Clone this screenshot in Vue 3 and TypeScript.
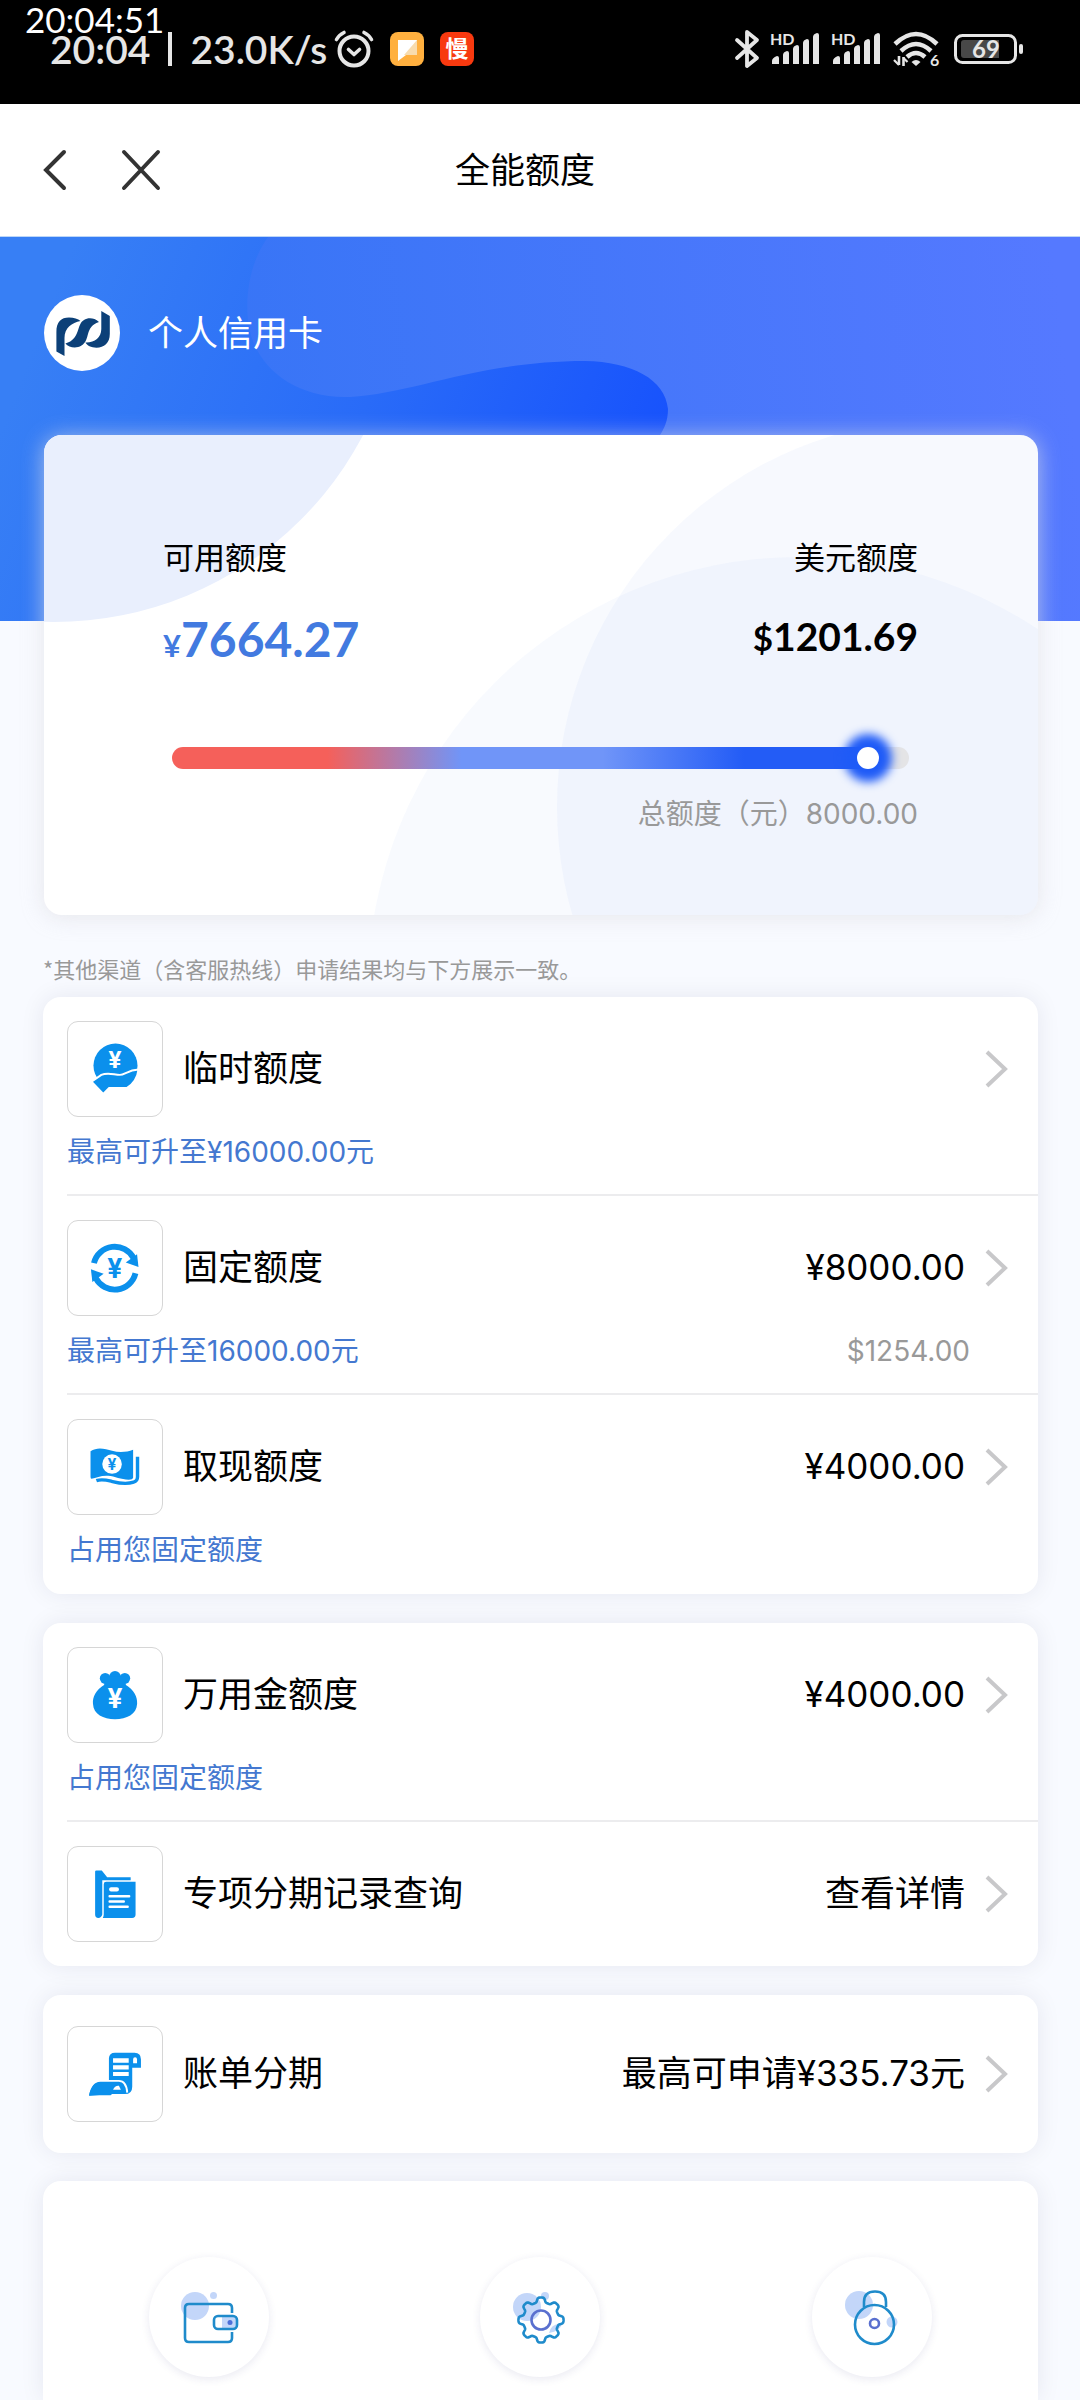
<script setup lang="ts">
import { ref } from 'vue'

interface LimitRow {
  icon: string
  title: string
  value?: string
  hint?: string
  extra?: string
}

const totalLimit = 8000
const availableLimit = ref(7664.27)
const usedPercent = (availableLimit.value / totalLimit) * 100

const groups: LimitRow[][] = [
  [
    { icon: 'hand', title: '临时额度', hint: '最高可升至¥16000.00元' },
    { icon: 'cycle', title: '固定额度', value: '¥8000.00', hint: '最高可升至16000.00元', extra: '$1254.00' },
    { icon: 'note', title: '取现额度', value: '¥4000.00', hint: '占用您固定额度' },
  ],
  [
    { icon: 'bag', title: '万用金额度', value: '¥4000.00', hint: '占用您固定额度' },
    { icon: 'folder', title: '专项分期记录查询', value: '查看详情' },
  ],
  [{ icon: 'bill', title: '账单分期', value: '最高可申请¥335.73元' }],
]

const shortcuts = [
  { icon: 'wallet', label: '钱包' },
  { icon: 'gear', label: '设置' },
  { icon: 'lock', label: '安全' },
]

// Outline of the eight-toothed gear, sampled around its centre.
const gearPath =
  Array.from({ length: 160 }, (_, i) => {
    const a = (i / 160) * Math.PI * 2
    const r = 20.2 + 2.4 * Math.tanh(2.2 * Math.cos(8 * a))
    const x = (61 + r * Math.sin(a)).toFixed(2)
    const y = (63 - r * Math.cos(a)).toFixed(2)
    return `${i ? 'L' : 'M'}${x} ${y}`
  }).join('') + 'Z'
</script>

<template>
  <div class="page">
    <header class="status">
      <span class="clock">20:04:51</span>
      <div class="status-left">
        <span>20:04</span>
        <i class="bar"></i>
        <span class="speed">23.0K/s</span>
        <svg class="alarm" viewBox="0 0 40 38" fill="none" stroke="#e6e6e6" stroke-linecap="round">
          <circle cx="20" cy="21" r="14.500" stroke-width="4" />
          <path d="M14.500 19.500l5.500 5 5.500-5" stroke-width="3.600" stroke-linejoin="round" />
          <path d="M2.500 9.500Q5 5 10 2.500M37.500 9.500Q35 5 30 2.500" stroke-width="3.600" />
        </svg>
        <svg class="app" viewBox="0 0 34 34">
          <rect width="34" height="34" rx="8" fill="#ffb03f" />
          <path d="M8 8h19v15H16l-8 6z" fill="#fff" />
          <path d="M27 8v15H14z" fill="#f8dcae" />
        </svg>
        <svg class="app" viewBox="0 0 34 34">
          <rect width="34" height="34" rx="8" fill="#f8390f" />
          <text x="17" y="25" text-anchor="middle" class="app-char">慢</text>
        </svg>
      </div>
      <div class="status-right">
        <svg class="bt" viewBox="0 0 24 38" fill="none" stroke="#e6e6e6" stroke-width="3.800" stroke-linejoin="round" stroke-linecap="round">
          <path d="M2 10l20 18-10 8V2l10 8L2 28" />
        </svg>
        <svg v-for="n in 2" :key="n" class="signal" viewBox="0 0 50 34" fill="#e6e6e6">
          <text x="0" y="13" class="hd">HD</text>
          <path d="M2 32v-3q0-3 5-5 2 0 2 2v6zM13 32V23q0-3 4-4 2 0 2 2v11zM23 32V17q0-3 4-4 2 0 2 2v17zM33 32V11q0-3 4-4 2 0 2 2v23zM43 32V5q0-3 4-4 2 0 2 2v29z" />
        </svg>
        <svg class="wifi" viewBox="0 0 46 36" fill="none" stroke="#e6e6e6" stroke-width="4.500">
          <path d="M2 13q21-20 42 0M8 20q15-14 30 0M14 26q9-8 18 0" />
          <path d="M18.500 31q4.500-4 9 0l-4.500 4z" fill="#e6e6e6" stroke="none" />
          <path d="M6 25v9M10.500 35v-9" stroke-width="2.600" />
          <path d="M1 29l5 5M10.500 27l4 4" stroke-width="2.200" />
          <text x="37" y="35" class="wifi-six">6</text>
        </svg>
        <svg class="battery" viewBox="0 0 69 30">
          <rect x="1.500" y="1.500" width="60" height="27" rx="7" fill="none" stroke="#e6e6e6" stroke-width="3" />
          <path d="M7 9q0-3 3-3h35v18H10q-3 0-3-3z" fill="#484848" />
          <rect x="65" y="10" width="4" height="10" rx="2" fill="#e6e6e6" />
          <text x="32" y="24" text-anchor="middle" class="percent">69</text>
        </svg>
      </div>
    </header>

    <nav class="nav">
      <div class="nav-buttons">
        <button type="button" aria-label="返回">
          <svg class="back" viewBox="0 0 24 42"><path d="M21 3L3 21l18 18" /></svg>
        </button>
        <button type="button" aria-label="关闭">
          <svg class="close" viewBox="0 0 40 42"><path d="M3 3l34 36M37 3L3 39" /></svg>
        </button>
      </div>
      <h1>全能额度</h1>
    </nav>

    <section class="hero">
      <svg class="hero-bg" viewBox="0 0 1080 384" preserveAspectRatio="none" aria-hidden="true">
        <defs>
          <linearGradient id="base" gradientUnits="userSpaceOnUse" x1="60" y1="40" x2="680" y2="280">
            <stop offset="0" stop-color="#377ff5" />
            <stop offset="0.5" stop-color="#296bf8" />
            <stop offset="1" stop-color="#154ffd" />
          </linearGradient>
          <linearGradient id="wave" gradientUnits="userSpaceOnUse" x1="240" y1="150" x2="1060" y2="60">
            <stop offset="0" stop-color="#3875f6" />
            <stop offset="1" stop-color="#5579ff" />
          </linearGradient>
        </defs>
        <rect width="1080" height="384" fill="url(#base)" />
        <path
          d="M268 0C250 25 244 60 249 90C256 130 295 162 350 160C415 156 480 124 585 124C632 125 665 142 668 172C668 184 664 192 660 198L640 384H1080V0Z"
          fill="url(#wave)"
        />
      </svg>

      <div class="brand">
        <svg class="logo" viewBox="0 0 76 76" aria-hidden="true">
          <circle cx="38" cy="38" r="38" fill="#fff" />
          <g fill="#0c4078">
            <path d="M12.400 37C12.400 27 17 22.500 25 22.500C30 22.500 34 24 36.500 26C28 27.500 20.500 33 20.500 43V61L12.400 56.500z" />
            <path d="M55 27C50 22.500 44 22.500 40 25C32 29.500 37 44 21.400 48.500C25 52.500 32 54 37.500 50.500C47 45 40 32 55 27z" />
            <path d="M57.300 16L65.800 21V39C65.800 48 60 52.700 52.500 52.700C47 52.700 43 50.500 41.400 47.500C50 48 57.300 43 57.300 34z" />
          </g>
        </svg>
        <span>个人信用卡</span>
      </div>

      <div class="summary">
        <svg class="summary-bg" viewBox="0 0 994 480" preserveAspectRatio="none" aria-hidden="true">
          <circle cx="10" cy="-162" r="349" fill="#e9effd" />
          <circle cx="901" cy="372" r="388" fill="#3d6eec" fill-opacity="0.045" />
          <circle cx="755" cy="553" r="431" fill="#3d6eec" fill-opacity="0.035" />
        </svg>
        <dl class="amounts">
          <div>
            <dt>可用额度</dt>
            <dd class="available"><small>¥</small>7664.27</dd>
          </div>
          <div class="usd">
            <dt>美元额度</dt>
            <dd><small>$</small>1201.69</dd>
          </div>
        </dl>
        <input
          v-model.number="availableLimit"
          class="meter"
          type="range"
          min="0"
          :max="totalLimit"
          step="0.01"
          aria-label="可用额度"
          :style="{ backgroundSize: usedPercent + '% 100%' }"
        />
        <p class="total">总额度（元）8000.00</p>
      </div>
    </section>

    <p class="notice">*其他渠道（含客服热线）申请结果均与下方展示一致。</p>

    <main class="groups">
      <ul v-for="(rows, g) in groups" :key="g" class="card" :class="{ single: rows.length === 1 }">
        <li v-for="row in rows" :key="row.title" :class="{ detailed: row.hint }">
          <button type="button" class="row">
            <span class="line">
              <span class="tile">
                <svg v-if="row.icon === 'hand'" viewBox="0 0 96 96">
                  <circle cx="48.500" cy="44.500" r="22.500" />
                  <path d="M24 61L34 54C41 51 47 54 53 54C58 54 61 49 72 48.500C71 57 67 63 60 67.500H42L36 73.500z" stroke="#fff" stroke-width="2" />
                  <text x="48" y="47" class="yen white">¥</text>
                </svg>
                <svg v-else-if="row.icon === 'cycle'" viewBox="0 0 96 96">
                  <g id="half">
                    <path d="M26.500 43A21.800 21.800 0 0 1 67 38" fill="none" stroke="#0b90ec" stroke-width="6" />
                    <path d="M70.500 34L72 47L59 42.500z" />
                  </g>
                  <use href="#half" transform="rotate(180 47.700 48.200)" />
                  <text x="47.700" y="58" class="yen large">¥</text>
                </svg>
                <svg v-else-if="row.icon === 'note'" viewBox="0 0 96 96">
                  <path d="M23 32C30 27 38 29.500 45 31.500S60 33 66.500 30.500V59Q66 61 62 61C54 61 48 57.500 41 57S29 59 24 60Q23 60 23 58z" />
                  <path d="M71 37.500V58Q71 62.500 67 63.500C58 66.500 50 64 44 62.500S33 60.500 29 62" fill="none" stroke="#0b90ec" stroke-width="3.500" />
                  <circle cx="45" cy="45" r="10" fill="#fff" />
                  <text x="45" y="51" class="yen small">¥</text>
                </svg>
                <svg v-else-if="row.icon === 'bag'" viewBox="0 0 96 96">
                  <path d="M38 37C28 43 25 50 25.500 57C26 68 36 72.700 48 72.700S70 68 70.600 57C71 50 68 43 58 37z" />
                  <circle cx="38" cy="31" r="5.500" /><circle cx="48" cy="29.500" r="6" /><circle cx="58" cy="31" r="5.500" />
                  <rect x="37" y="29" width="22" height="9" />
                  <text x="48" y="61" class="yen large white">¥</text>
                </svg>
                <svg v-else-if="row.icon === 'folder'" viewBox="0 0 96 96">
                  <path d="M27.700 25Q27.700 24 29 24H34.500L40 31H64V34H35V69Q34 72.500 31 72.500Q27.700 72.500 27.700 69z" />
                  <path d="M36.500 38Q36.500 35.500 39 35.500H69V69Q69 72.500 65.500 72.500H35.500Q36.500 71 36.500 69z" />
                  <path d="M42.500 50.300H62.500M42.500 55.700H57M42.500 61H61" fill="none" stroke="#fff" stroke-width="2.400" stroke-linecap="round" />
                  <rect x="42" y="41" width="10" height="4.500" rx="2" fill="#fff" />
                </svg>
                <svg v-else viewBox="0 0 96 96">
                  <path d="M41.800 54V32Q42 26.300 48 26.300H68Q74.500 26.300 74.500 33V41.500H65.600V61Q65.600 68.500 58 68.500H45z" />
                  <path d="M46 32H62V36.500H46zM46 39H62V43.500H46zM46 46H62V50H46zM66.500 37V33Q66.500 31 68.500 31T70.500 33V37z" fill="#fff" />
                  <path d="M20.500 70.500C22 62 26 55 33 55H52C58 55 60 60 60.500 67" stroke="#fff" stroke-width="2" />
                  <path d="M21.500 69.700C23 62 27 56.500 33 56.500H50C56 56.500 57 62 57.500 65H49L43.500 69.700z" />
                  <path d="M46 64Q48 59.500 52 60L54 64z" fill="#fff" />
                </svg>
              </span>
              <span class="title">{{ row.title }}</span>
              <span class="value">{{ row.value }}</span>
              <svg class="chevron" viewBox="0 0 22 38"><path d="M2 2l18 17L2 36" /></svg>
            </span>
            <span v-if="row.hint" class="hint">
              <span>{{ row.hint }}</span>
              <span class="extra">{{ row.extra }}</span>
            </span>
          </button>
        </li>
      </ul>
    </main>

    <footer class="shortcuts">
      <button v-for="item in shortcuts" :key="item.icon" type="button" :aria-label="item.label">
        <svg v-if="item.icon === 'wallet'" viewBox="0 0 120 120">
          <circle cx="46" cy="49" r="14" class="blob" />
          <circle cx="64.500" cy="38.500" r="3.500" class="blob" />
          <path d="M83 56V51Q83 47 79 47H40Q36 47 36 51V81Q36 85 40 85H79Q83 85 83 81V75" class="blue" />
          <rect x="73" y="59" width="15" height="13" class="blob" />
          <rect x="65" y="59" width="23" height="13" rx="4" class="blue" />
          <circle cx="81" cy="65.500" r="2.500" fill="#4d6fd8" />
        </svg>
        <svg v-else-if="item.icon === 'gear'" viewBox="0 0 120 120">
          <circle cx="47" cy="50" r="14" class="blob" />
          <circle cx="65" cy="39" r="4" class="blob" />
          <path d="M69 76Q71 66 82 67Q80 74 69 76z" class="blob" />
          <path :d="gearPath" class="blue" />
          <circle cx="61" cy="63" r="9.500" class="violet" />
        </svg>
        <svg v-else viewBox="0 0 120 120">
          <circle cx="47" cy="48" r="14" class="blob" />
          <circle cx="80" cy="65" r="5.500" class="blob" />
          <path d="M52 50V45Q52 34.500 63 34.500T74 45V50" class="blue" />
          <circle cx="62.500" cy="67.500" r="19.500" class="blue" />
          <circle cx="62.500" cy="66.500" r="4.500" class="violet" />
        </svg>
      </button>
    </footer>
  </div>
</template>

<style>
body {
  margin: 0;
  background: #f8faff;
}
</style>

<style scoped>
.page {
  display: flex;
  flex-direction: column;
  min-height: 100vh;
  background: #f8faff;
  color: #000;
  font-family: Inter, "Noto Sans CJK SC", sans-serif;
  font-size: 35px;
}

button {
  margin: 0;
  padding: 0;
  border: 0;
  background: none;
  color: inherit;
  font: inherit;
}

svg {
  display: block;
  overflow: visible;
}

/* Status bar */
.status {
  position: relative;
  display: flex;
  justify-content: space-between;
  align-items: center;
  height: 104px;
  padding: 0 57px 6px 50px;
  box-sizing: border-box;
  background: #000;
  color: #e6e6e6;
  font-family: Lato, sans-serif;
  font-size: 39px;
  font-weight: 600;
  line-height: 48px;
}

.clock {
  position: absolute;
  top: 0;
  left: 25px;
  color: #fff;
  font-size: 35px;
  font-weight: 400;
  line-height: 38px;
}

.status-left,
.status-right {
  display: flex;
  align-items: center;
}

.bar {
  width: 4px;
  height: 34px;
  margin: 0 18px;
  background: #e6e6e6;
}

.alarm {
  width: 40px;
  height: 38px;
  margin-left: 7px;
}

.app {
  width: 34px;
  height: 34px;
  margin-left: 16px;
}

.app-char {
  fill: #fff;
  font-family: "Noto Sans CJK SC", sans-serif;
  font-size: 23px;
  font-weight: 700;
}

.bt {
  width: 24px;
  height: 38px;
}

.signal {
  width: 50px;
  height: 34px;
  margin-left: 11px;
}

.hd {
  font-family: Lato, sans-serif;
  font-size: 16px;
  font-weight: 700;
}

.wifi {
  width: 46px;
  height: 36px;
  margin-left: 12px;
}

.wifi-six {
  fill: #e6e6e6;
  stroke: none;
  font-family: Lato, sans-serif;
  font-size: 16px;
  font-weight: 700;
}

.battery {
  width: 69px;
  height: 30px;
  margin-left: 15px;
}

.percent {
  fill: #e6e6e6;
  font-family: Lato, sans-serif;
  font-size: 24px;
  font-weight: 700;
}

/* Title bar */
.nav {
  display: grid;
  grid-template-columns: 118px 1fr 118px;
  align-items: center;
  height: 132px;
  padding: 0 73px 0 43px;
  background: #fff;
  border-bottom: 1px solid #bcd6f8;
}

.nav-buttons {
  display: flex;
  align-items: center;
  justify-content: space-between;
}

.nav svg {
  fill: none;
  stroke: #333;
  stroke-width: 4;
  stroke-linecap: round;
}

.back {
  width: 24px;
  height: 42px;
}

.close {
  width: 40px;
  height: 42px;
}

.nav h1 {
  margin: 0;
  font-size: 35px;
  font-weight: 400;
  line-height: 48px;
  text-align: center;
}

/* Hero */
.hero {
  position: relative;
  padding: 58px 42px 0 44px;
}

.hero-bg {
  position: absolute;
  top: 0;
  left: 0;
  width: 100%;
  height: 384px;
}

.brand {
  position: relative;
  display: flex;
  align-items: center;
  gap: 28px;
  color: #fff;
  line-height: 48px;
}

.logo {
  width: 76px;
  height: 76px;
}

.summary {
  position: relative;
  margin-top: 64px;
  padding: 101px 120px 81px 119px;
  border-radius: 18px;
  background: #fff;
  box-shadow: 0 2px 22px rgba(222, 222, 226, 0.7);
}

.summary-bg {
  position: absolute;
  top: 0;
  left: 0;
  width: 100%;
  height: 100%;
  overflow: hidden;
  border-radius: 18px;
}

.amounts {
  position: relative;
  display: flex;
  justify-content: space-between;
  margin: 0;
}

.amounts dt {
  font-size: 31px;
  line-height: 44px;
}

.amounts dd {
  margin: 29px 0 0;
  font-family: Lato, sans-serif;
  font-size: 39px;
  font-weight: 700;
  line-height: 54px;
}

.amounts small {
  font-size: 35px;
}

.amounts .available {
  color: #427ae0;
  font-size: 48px;
  line-height: 60px;
}

.available small {
  font-size: 31px;
}

.usd {
  text-align: right;
}

.meter {
  position: relative;
  display: block;
  width: calc(100% - 18px);
  height: 22px;
  margin: 72px 9px 0;
  border-radius: 11px;
  background: #e4e4e6 linear-gradient(90deg, #f5605a 22%, #7095f8 41%, #7095f8 61%, #235cf6 81%) no-repeat;
  appearance: none;
}

.meter::-webkit-slider-thumb {
  width: 22px;
  height: 22px;
  border-radius: 50%;
  background: #fff;
  box-shadow: 0 0 10px 13px #1f5bf7;
  appearance: none;
}

.total {
  position: relative;
  margin: 25px 0 0;
  color: #999;
  font-size: 28px;
  line-height: 40px;
  text-align: right;
}

.notice {
  margin: 36px 43px 12px;
  color: #999;
  font-family: "Noto Sans CJK SC", sans-serif;
  font-size: 22px;
  line-height: 34px;
}

/* Limit lists */
.groups {
  display: grid;
  gap: 29px;
  padding: 0 42px 0 43px;
}

.card {
  margin: 0;
  padding: 0 0 0 24px;
  border-radius: 18px;
  background: #fff;
  box-shadow: 0 0 24px rgba(30, 30, 60, 0.08);
  list-style: none;
}

.card li {
  padding: 24px 0;
}

.card li.detailed {
  padding-bottom: 22px;
  border-bottom: 2px solid #ececee;
}

.card li.detailed:last-child {
  border-bottom-color: transparent;
}

.single {
  padding-top: 7px;
  padding-bottom: 7px;
}

.row {
  display: block;
  width: 100%;
  text-align: left;
}

.line {
  display: flex;
  align-items: center;
  padding-right: 31px;
  line-height: 48px;
}

.tile {
  width: 96px;
  height: 96px;
  margin-right: 20px;
  box-sizing: border-box;
  border: 1px solid #d6d6d6;
  border-radius: 11px;
}

.tile svg {
  width: 94px;
  height: 94px;
  fill: #0b90ec;
}

.yen {
  font-family: Inter, sans-serif;
  font-size: 24px;
  font-weight: 700;
  text-anchor: middle;
}

.yen.white {
  fill: #fff;
}

.yen.large {
  font-size: 27px;
}

.yen.small {
  font-size: 16px;
}

.title,
.value {
  padding-bottom: 2px;
}

.value {
  margin-left: auto;
}

.chevron {
  width: 22px;
  height: 38px;
  margin-left: 20px;
  fill: none;
  stroke: #c8c8ca;
  stroke-width: 4;
}

.hint {
  display: flex;
  justify-content: space-between;
  margin-top: 15px;
  padding-right: 68px;
  color: #4478d0;
  font-size: 28px;
  line-height: 40px;
}

.extra {
  color: #999;
}

/* Shortcuts */
.shortcuts {
  display: grid;
  flex: 1;
  grid-template-columns: repeat(3, 1fr);
  align-items: start;
  justify-items: center;
  margin: 28px 42px 0 43px;
  padding-top: 76px;
  border-radius: 18px 18px 0 0;
  background: #fff;
  box-shadow: 0 0 24px rgba(30, 30, 60, 0.08);
}

.shortcuts button {
  width: 120px;
  height: 120px;
  border-radius: 50%;
  box-shadow: 0 2px 8px rgba(40, 40, 120, 0.1);
}

.blob {
  fill: #c3d6f9;
}

.blue {
  fill: none;
  stroke: #1f8bcb;
  stroke-width: 2.6;
}

.violet {
  fill: none;
  stroke: #5a70cf;
  stroke-width: 2.6;
}
</style>
